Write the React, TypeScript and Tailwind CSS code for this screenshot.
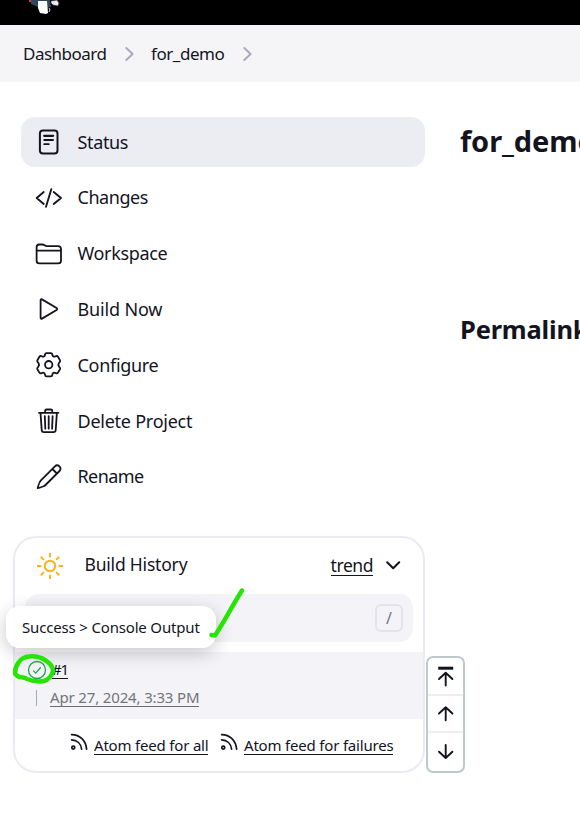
import React from "react";

function Chevron() {
  return (
    <svg className="h-[14px] w-[9px] text-[#a8a8bc]" viewBox="0 0 9 14" fill="none" stroke="currentColor" strokeWidth="1.9" strokeLinecap="round" strokeLinejoin="round">
      <path d="M1.3 1 7.6 7 1.3 13" />
    </svg>
  );
}

const icons: Record<string, React.ReactNode> = {
  Status: (
    <g fill="none" stroke="currentColor" strokeWidth="2" strokeLinecap="round">
      <rect x="4.9" y="2.6" width="17.6" height="22.8" rx="3" />
      <path d="M9.2 7.8h8.9" strokeWidth="2.3" />
      <path d="M9.2 12h8.9M9.2 16.2h4.6" strokeWidth="1.8" />
    </g>
  ),
  Changes: (
    <g fill="none" stroke="currentColor" strokeWidth="1.9" strokeLinecap="round" strokeLinejoin="round">
      <path d="M8.7 8 1.7 14l7 6M18.7 8l7.3 6-7.3 6M16.3 5.2 11 22.8" />
    </g>
  ),
  Workspace: (
    <g fill="none" stroke="currentColor" strokeWidth="1.8" strokeLinejoin="round">
      <path d="M1.6 20.7V7.2Q1.6 4.5 4.3 4.5h3.2c1.8 0 2.4 1.6 4.3 1.6h11.2q3 0 3 3v11.6q0 2.7-2.7 2.7h-19q-2.7 0-2.7-2.7ZM1.6 10.6h24.4" />
    </g>
  ),
  "Build Now": (
    <path d="M5.6 5.2v17.6c0 .8.7 1.2 1.4.8l14.6-8.6c.8-.5.8-1.5 0-2L7 4.4c-.7-.4-1.4 0-1.4.8Z" fill="none" stroke="currentColor" strokeWidth="1.8" />
  ),
  Configure: (
    <g fill="none" stroke="currentColor" strokeWidth="1.8" strokeLinejoin="round">
      <circle cx="13.7" cy="13.7" r="3.7" />
      <path d="M11.5 2.1h4.4q1.2 0 1.4 1.2l.2 1q.2.9 1 1.2.9.4 1.7 0l.9-.4q1.2-.4 1.9.7l2 3.4q.6 1.1-.3 1.9l-.7.7q-1.2 1.8 0 3.8l.7.7q.9.8.3 1.9l-2 3.4q-.7 1.1-1.9.7l-.9-.4q-.8-.4-1.7 0-.8.3-1 1.2l-.2 1q-.2 1.2-1.4 1.2h-4.4q-1.2 0-1.4-1.2l-.2-1q-.2-.9-1-1.2-.9-.4-1.7 0l-.9.4q-1.2.4-1.9-.7l-2-3.4q-.6-1.1.3-1.9l.7-.7q1.2-2 0-3.8l-.7-.7q-.9-.8-.3-1.9l2-3.4q.7-1.1 1.9-.7l.9.4q.8.4 1.7 0 .8-.3 1-1.2l.2-1q.2-1.2 1.4-1.2Z" />
    </g>
  ),
  "Delete Project": (
    <g fill="none" stroke="currentColor" strokeWidth="1.8" strokeLinecap="round" strokeLinejoin="round">
      <path d="M5.5 5.8 6.7 23q.1 2.2 2.2 2.2h9.6q2.1 0 2.2-2.2L21.9 5.8M4 5.8h19.4M10.1 5.5V4q0-1.5 1.5-1.5h4.2q1.5 0 1.5 1.5v1.5M13.7 9.2v12.5M9.8 9.2l.5 12.5M17.6 9.2l-.5 12.5" />
    </g>
  ),
  Rename: (
    <g fill="none" stroke="currentColor" strokeWidth="1.8" strokeLinecap="round" strokeLinejoin="round">
      <path d="M19.9 3.4 5.9 17.4c-.9.9-2.8 5.6-3.2 7.8 2.2-.4 6.9-2.3 7.8-3.2l14-14c1.2-1.2 1.2-3.1 0-4.6-1.4-1.3-3.4-1.2-4.6 0ZM17.4 6l4.5 4.5" />
    </g>
  ),
};

const items = [
  { name: "Status", spacing: "tracking-[-0.35px]" },
  { name: "Changes", spacing: "tracking-[-0.45px]" },
  { name: "Workspace", spacing: "tracking-[-0.35px]" },
  { name: "Build Now", spacing: "tracking-[-0.15px]" },
  { name: "Configure", spacing: "tracking-[-0.3px]" },
  { name: "Delete Project", spacing: "tracking-[-0.25px]" },
  { name: "Rename", spacing: "tracking-[-0.6px]" },
];

function Feed({ label, className }: { label: string; className: string }) {
  return (
    <a className={"flex items-start gap-[6px] " + className}>
      <svg className="h-[18px] w-[18px]" viewBox="0 0 18 18" fill="none" stroke="currentColor" strokeWidth="1.7" strokeLinecap="round">
        <circle cx="3.3" cy="14.6" r="1.5" />
        <path d="M1.6 6.9c5.5.2 9.4 3.9 10 9.2M1.6 1.6c8.4.1 14.2 6 15 14.5" />
      </svg>
      <span className="mt-1 whitespace-nowrap border-b border-[#14141f] text-[15px] leading-[17px] tracking-[-0.19px]">{label}</span>
    </a>
  );
}

function Arrow({ kind }: { kind: "top" | "up" | "down" }) {
  return (
    <svg className="h-6 w-5" viewBox="0 0 20 24" fill="none" stroke="#14141f" strokeWidth="1.9" strokeLinecap="round" strokeLinejoin="round">
      {kind === "top" && <path d="M2.2 2.2h15" strokeWidth="3" strokeLinecap="butt" />}
      {kind === "top" && <path d="M9.7 19.5V6.7M3 13l6.7-6.3 6.7 6.3" />}
      {kind === "up" && <path d="M9.7 18.2V5.2M3 11.5l6.7-6.3 6.7 6.3" />}
      {kind === "down" && <path d="M9.7 5v13M3 11.7 9.7 18l6.7-6.3" />}
    </svg>
  );
}

export default function App() {
  return (
    <div className="relative h-[816px] w-[580px] overflow-hidden bg-white font-['Noto_Sans',sans-serif] text-[#14141f]">
      <header className="h-[25px] bg-black pl-[28px]">
        <svg width="34" height="18" viewBox="0 0 34 18">
          <path d="M2 0h20l1 7-4 1-9-1-7-3Z" fill="#2f4759" />
          <path d="M1 0h2v2H1Z" fill="#d33833" />
          <path d="M10 1h9l1 12-2 1-6-1-2-5Z" fill="#fff" />
          <path d="M23 1l6-1 2 3-1 3-5-1-2-2Z" fill="#eee" stroke="#222" strokeWidth=".6" />
          <path d="m21 8 1 2-1 2M26 1l1 2" stroke="#ddd" fill="none" />
        </svg>
      </header>
      <nav className="flex h-[57px] items-center bg-[#f5f5f8] pl-[23px] text-[17px]">
        <span className="w-[84px] whitespace-nowrap tracking-[-0.5px]">Dashboard</span>
        <span className="ml-[18px]"><Chevron /></span>
        <span className="ml-[17px] w-[74px] whitespace-nowrap tracking-[-0.45px]">for_demo</span>
        <span className="ml-[18px]"><Chevron /></span>
      </nav>
      <div className="flex">
        <aside className="w-[425px] shrink-0 pt-[35px]">
          <div className="ml-[21px] flex w-[404px] flex-col gap-[5.83px]">
            {items.map((item, i) => (
              <a key={item.name} className={"flex h-[50px] items-center rounded-[14px] pl-[14px] " + (i === 0 ? "bg-[#ecedf3]" : "")}>
                <svg className="h-7 w-7 shrink-0" viewBox="0 0 28 28">{icons[item.name]}</svg>
                <span className={"-mt-px ml-[14.5px] whitespace-nowrap text-[18px] leading-[26px] " + item.spacing}>{item.name}</span>
              </a>
            ))}
          </div>
          <section className="ml-[13px] mt-[34px] h-[237px] w-[412px] rounded-[23px] border-2 border-[#eaeaf2]">
            <div className="flex h-14 items-center pl-[22px] pr-[22px]">
              <svg className="h-7 w-7" viewBox="0 0 28 28" fill="none" stroke="#ffb11b" strokeWidth="2">
                <circle cx="13" cy="14" r="5.2" />
                <path d="M13 1v4.3M13 22.7V27M0 14h4.3M21.7 14H26M3.8 4.8 6.9 7.9M19.1 20.1l3.1 3.1M22.2 4.8 19.1 7.9M6.9 20.1l-3.1 3.1" />
              </svg>
              <span className="-mt-[3px] ml-[19.5px] text-[17.5px] leading-[26px] tracking-[-0.2px]">Build History</span>
              <span className="ml-auto border-b border-[#14141f] text-[17.5px] leading-[19px] tracking-[-0.45px]">trend</span>
              <svg className="ml-[13px] h-[9px] w-[15px]" viewBox="0 0 15 9" fill="none" stroke="currentColor" strokeWidth="2" strokeLinecap="round" strokeLinejoin="round"><path d="m1.2 1.3 6 6 6-6" /></svg>
            </div>
            <div className="ml-[10px] flex h-12 w-[388px] items-center justify-end rounded-[14px] bg-[#f3f3f8] pr-[10px]">
              <kbd className="flex h-7 w-7 items-center justify-center rounded-md border-2 border-[#e3e3ed] font-['Noto_Sans',sans-serif] text-[16px] text-[#737390]">/</kbd>
            </div>
            <div className="mt-[10px] h-[67px] bg-[#f3f3f8] pt-[7px]">
              <div className="flex h-[22px] items-center pl-[12px]">
                <svg className="h-5 w-5" viewBox="0 0 20 20" fill="none" stroke="#1ea64b" strokeWidth="1.3" strokeLinecap="round" strokeLinejoin="round"><circle cx="10" cy="10" r="8.5" /><path d="m6.5 10.9 2.2 2.2 4.7-5.4" /></svg>
                <span className="ml-[5px] border-b border-[#14141f] text-[15px] leading-[17px] tracking-[-1.3px]">#1</span>
              </div>
              <div className="mt-2 flex h-[18px] items-center pl-[21px]">
                <span className="h-4 w-px bg-[#a0adb5]" />
                <span className="ml-[13px] whitespace-nowrap border-b border-[#6b6b72] text-[15px] leading-[17px] tracking-[-0.15px] text-[#737378]">Apr 27, 2024, 3:33 PM</span>
              </div>
            </div>
            <div className="flex pl-[55px] pt-[14px]">
              <Feed label="Atom feed for all" className="w-[150px]" />
              <Feed label="Atom feed for failures" className="" />
            </div>
          </section>
        </aside>
        <main className="pl-[35px] pt-[38px]">
          <h1 className="whitespace-nowrap text-[29px] font-bold leading-[42px] tracking-[-0.1px]">for_demo</h1>
          <h2 className="mt-[147px] whitespace-nowrap text-[25.5px] font-bold leading-[40px] tracking-[-0.2px]">Permalinks</h2>
        </main>
      </div>

      <div className="absolute left-[426px] top-[656px] flex h-[117px] w-[39px] flex-col rounded-[7px] border-2 border-[#bec9cc] bg-white">
        <div className="flex h-[38px] items-center justify-center border-b-2 border-[#eeeeef] pt-1"><Arrow kind="top" /></div>
        <div className="flex h-[37px] items-center justify-center border-b-2 border-[#eeeeef]"><Arrow kind="up" /></div>
        <div className="flex flex-1 items-center justify-center"><Arrow kind="down" /></div>
      </div>
      <div className="absolute left-[6px] top-[606px] flex h-[42px] w-[210px] items-center rounded-[14px] bg-white/95 pl-4 shadow-[0_5px_18px_rgba(0,0,0,0.22)]">
        <span className="whitespace-nowrap text-[15px] tracking-[-0.17px]">Success &gt; Console Output</span>
      </div>
      <svg className="absolute left-0 top-[580px]" width="260" height="110" viewBox="0 580 260 110" fill="none" stroke="#24e600" strokeWidth="4.5" strokeLinecap="round" strokeLinejoin="round">
        <path d="m211.5 635 3.5.5C224 622 232 606 242 590.5" />
        <path d="M53 671C53 664 42 655 29 656.5 20 657 15 666 15 673c2 6 8 3 12 6 5 2 12 3 17 2 4-1 8-5 9-10Z" />
      </svg>
    </div>
  );
}
